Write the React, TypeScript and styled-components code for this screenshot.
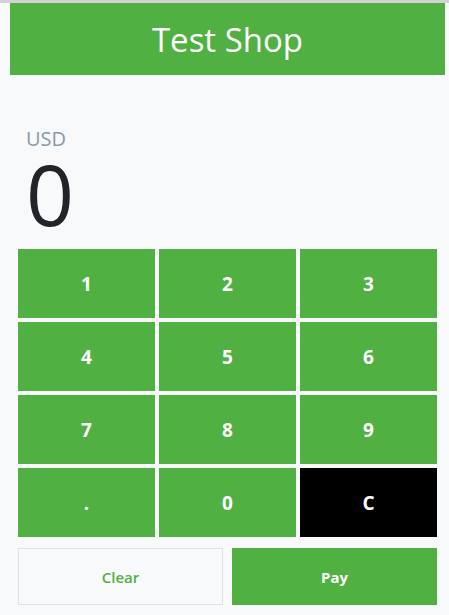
import React from "react";
import styled, { createGlobalStyle } from "styled-components";

const GREEN = "#50b142";

const Global = createGlobalStyle`
  html, body { margin: 0; padding: 0; background: #f8f9fa; }
  body { font-family: "Open Sans", "Noto Sans", sans-serif; }
  * { box-sizing: border-box; }
`;

const Page = styled.div`
  border-top: 3px solid #d2d2d2;
  min-height: 615px;
  background: #f8f9fa;
  display: flex;
  flex-direction: column;
`;

const Header = styled.header`
  margin: 0 4px 0 10px;
  height: 72px;
  background: ${GREEN};
  color: #fff;
  display: flex;
  align-items: center;
  justify-content: center;
  font-size: 33px;
  font-weight: 500;
`;

const Display = styled.section`
  padding: 50px 0 0 26px;
  display: flex;
  flex-direction: column;
`;

const Currency = styled.div`
  font-size: 20px;
  line-height: 27px;
  color: #8a99a6;
`;

const Amount = styled.div`
  font-size: 84px;
  font-weight: 400;
  line-height: 84px;
  color: #212529;
`;

const Keypad = styled.div`
  margin: 13px 12px 0 18px;
  display: grid;
  grid-template-columns: repeat(3, 1fr);
  grid-auto-rows: 69px;
  gap: 4px;
`;

const Key = styled.button<{ $dark?: boolean }>`
  border: none;
  background: ${(p) => (p.$dark ? "#000" : GREEN)};
  color: #fff;
  font-family: "Open Sans", sans-serif;
  font-weight: 700;
  font-size: 19px;
  padding: 0;
`;

const Actions = styled.div`
  margin: 11px 12px 0 18px;
  display: grid;
  grid-template-columns: 1fr 1fr;
  gap: 9px;
`;

const Action = styled.button<{ $primary?: boolean }>`
  height: 57px;
  border: 1px solid ${(p) => (p.$primary ? GREEN : "#dee2e6")};
  background: ${(p) => (p.$primary ? GREEN : "#f8f9fa")};
  color: ${(p) => (p.$primary ? "#fff" : GREEN)};
  font-family: "Open Sans", sans-serif;
  font-weight: ${(p) => (p.$primary ? 700 : 600)};
  font-size: 15px;
  padding: 0;
`;

const keys = ["1", "2", "3", "4", "5", "6", "7", "8", "9", ".", "0", "C"];

export default function App() {
  return (
    <>
      <Global />
      <Page>
        <Header>Test Shop</Header>
        <Display>
          <Currency>USD</Currency>
          <Amount>0</Amount>
        </Display>
        <Keypad>
          {keys.map((k) => (
            <Key key={k} $dark={k === "C"}>
              {k}
            </Key>
          ))}
        </Keypad>
        <Actions>
          <Action>Clear</Action>
          <Action $primary>Pay</Action>
        </Actions>
      </Page>
    </>
  );
}
